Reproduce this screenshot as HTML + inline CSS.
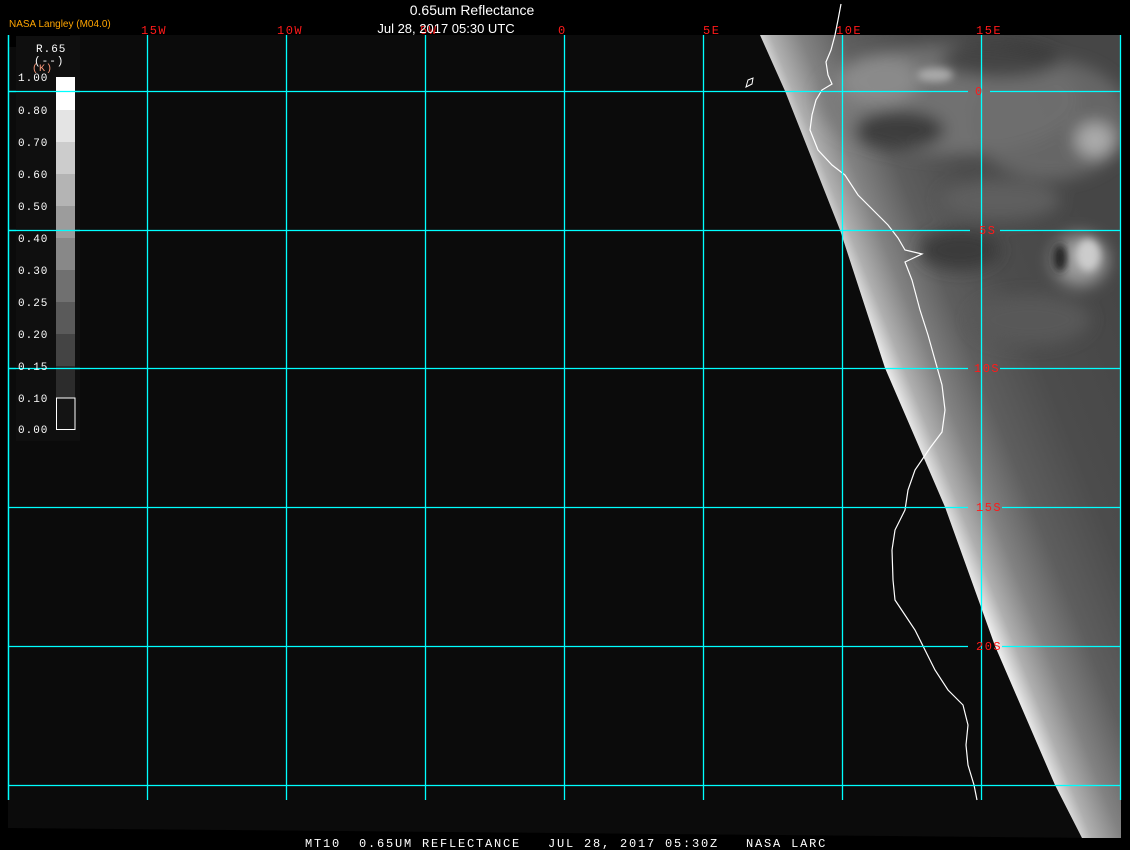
<!DOCTYPE html>
<html><head><meta charset="utf-8"><style>
html,body{margin:0;padding:0;background:#000;width:1130px;height:850px;overflow:hidden}
svg{display:block}
</style></head><body>
<svg width="1130" height="850" viewBox="0 0 1130 850" xmlns="http://www.w3.org/2000/svg">
<defs>
<linearGradient id="lg" gradientUnits="userSpaceOnUse" x1="900" y1="420" x2="1135" y2="326">
<stop offset="0" stop-color="#ffffff"/>
<stop offset="0.04" stop-color="#dcdcdc"/>
<stop offset="0.09" stop-color="#b0b0b0"/>
<stop offset="0.2" stop-color="#828282"/>
<stop offset="0.36" stop-color="#5e5e5e"/>
<stop offset="0.6" stop-color="#4c4c4c"/>
<stop offset="1" stop-color="#464646"/>
</linearGradient>
<filter id="bl" x="-50%" y="-50%" width="200%" height="200%"><feGaussianBlur stdDeviation="8"/></filter>
<filter id="bl2" x="-50%" y="-50%" width="200%" height="200%"><feGaussianBlur stdDeviation="4"/></filter>
<clipPath id="ec"><polygon points="760,35 785,91 840,230 885,368 945,507 995,646 1055,785 1082,838 1121,838 1121,35"/></clipPath>
</defs>
<polygon points="8,35 1121,35 1121,838 1105,838 8,828" fill="#0b0b0b"/>
<rect x="0" y="35" width="70" height="12" fill="#000"/>
<g clip-path="url(#ec)">
<rect x="700" y="30" width="430" height="820" fill="url(#lg)"/>
<g filter="url(#bl)">
<ellipse cx="950" cy="100" rx="130" ry="55" fill="#7a7a7a" opacity="0.8"/>
<ellipse cx="1050" cy="120" rx="80" ry="60" fill="#6e6e6e" opacity="0.8"/>
<ellipse cx="900" cy="130" rx="45" ry="20" fill="#3e3e3e"/>
<ellipse cx="1000" cy="200" rx="60" ry="20" fill="#5e5e5e"/>
<ellipse cx="1095" cy="140" rx="20" ry="18" fill="#aaa"/>
<ellipse cx="1080" cy="260" rx="28" ry="26" fill="#999"/>
<ellipse cx="1000" cy="60" rx="60" ry="18" fill="#333" opacity="0.7"/>
<ellipse cx="1030" cy="320" rx="60" ry="25" fill="#595959"/>
<ellipse cx="960" cy="250" rx="40" ry="20" fill="#3a3a3a"/>
<ellipse cx="880" cy="80" rx="40" ry="25" fill="#999" opacity="0.6"/>
</g>
<g filter="url(#bl2)">
<ellipse cx="1088" cy="255" rx="12" ry="16" fill="#ccc"/>
<ellipse cx="1060" cy="258" rx="7" ry="14" fill="#222"/>
<ellipse cx="935" cy="75" rx="18" ry="7" fill="#aaa"/>
</g>
</g>
<polyline fill="none" stroke="#fff" stroke-width="1.2" points="841,4 838,20 835,35 831,50 826,62 828,75 832,84 822,90 816,100 812,115 810,130 818,150 832,165 845,175 858,195 873,210 888,225 898,238 905,250 922,254 905,262 912,280 920,310 928,335 935,360 942,385 945,410 942,432 930,448 915,470 908,490 905,510 895,530 892,550 893,580 895,600 905,615 915,630 925,650 935,670 948,690 963,705 968,725 966,745 968,765 974,785 977,800"/>
<path d="M748,80 l5,-2 l-1,6 l-6,3 z" fill="none" stroke="#fff" stroke-width="1"/>
<g stroke="#00ffff" stroke-width="1.3" fill="none">
<line x1="8.5" y1="35" x2="8.5" y2="800"/>
<line x1="147.5" y1="35" x2="147.5" y2="800"/>
<line x1="286.5" y1="35" x2="286.5" y2="800"/>
<line x1="425.5" y1="35" x2="425.5" y2="800"/>
<line x1="564.5" y1="35" x2="564.5" y2="800"/>
<line x1="703.5" y1="35" x2="703.5" y2="800"/>
<line x1="842.5" y1="35" x2="842.5" y2="800"/>
<line x1="981.5" y1="35" x2="981.5" y2="800"/>
<line x1="1120.5" y1="35" x2="1120.5" y2="800"/>
<line x1="8" y1="91.5" x2="968" y2="91.5"/><line x1="990" y1="91.5" x2="1121" y2="91.5"/>
<line x1="8" y1="230.5" x2="970" y2="230.5"/><line x1="1000" y1="230.5" x2="1121" y2="230.5"/>
<line x1="8" y1="368.5" x2="968" y2="368.5"/><line x1="1000" y1="368.5" x2="1121" y2="368.5"/>
<line x1="8" y1="507.5" x2="968" y2="507.5"/><line x1="1002" y1="507.5" x2="1121" y2="507.5"/>
<line x1="8" y1="646.5" x2="968" y2="646.5"/><line x1="1002" y1="646.5" x2="1121" y2="646.5"/>
<line x1="8" y1="785.5" x2="1121" y2="785.5"/>
</g>
<g font-family="Liberation Mono, monospace" font-size="12" fill="#ff1a1a" letter-spacing="1.5">
<text x="141" y="34">15W</text>
<text x="277" y="34">10W</text>
<text x="420" y="34">5W</text>
<text x="558" y="34">0</text>
<text x="703" y="34">5E</text>
<text x="836" y="34">10E</text>
<text x="976" y="34">15E</text>
<text x="975" y="95">0</text>
<text x="979" y="234">5S</text>
<text x="974" y="372">10S</text>
<text x="976" y="511">15S</text>
<text x="976" y="650">20S</text>
</g>
<text x="472" y="15" text-anchor="middle" font-family="Liberation Sans, sans-serif" font-size="14" fill="#fff">0.65um Reflectance</text>
<text x="446" y="33" text-anchor="middle" font-family="Liberation Sans, sans-serif" font-size="13" fill="#fff">Jul 28, 2017 05:30 UTC</text>
<text x="9" y="27" font-family="Liberation Sans, sans-serif" font-size="10" fill="#ffa500">NASA Langley (M04.0)</text>
<rect x="16" y="36" width="64" height="405" fill="#0f0f0f"/>
<line x1="8.5" y1="35" x2="8.5" y2="800" stroke="#00ffff" stroke-width="1.3"/>
<line x1="8" y1="91.5" x2="80" y2="91.5" stroke="#00ffff" stroke-width="1.3"/>
<line x1="8" y1="230.5" x2="80" y2="230.5" stroke="#00ffff" stroke-width="1.3"/>
<line x1="8" y1="368.5" x2="80" y2="368.5" stroke="#00ffff" stroke-width="1.3"/>
<g font-family="Liberation Mono, monospace" font-size="11" fill="#fff" letter-spacing="1">
<text x="36" y="52">R.65</text>
<text x="34" y="64">(--)</text>
<text x="32" y="71" fill="#ff9a7a" font-size="10">(K)</text>
<text x="18" y="81">1.00</text>
<text x="18" y="114">0.80</text>
<text x="18" y="146">0.70</text>
<text x="18" y="178">0.60</text>
<text x="18" y="210">0.50</text>
<text x="18" y="242">0.40</text>
<text x="18" y="274">0.30</text>
<text x="18" y="306">0.25</text>
<text x="18" y="338">0.20</text>
<text x="18" y="370">0.15</text>
<text x="18" y="402">0.10</text>
<text x="18" y="433">0.00</text>
</g>
<rect x="56" y="77" width="19" height="33" fill="#fff"/>
<rect x="56" y="110" width="19" height="32" fill="#e4e4e4"/>
<rect x="56" y="142" width="19" height="32" fill="#cccccc"/>
<rect x="56" y="174" width="19" height="32" fill="#b4b4b4"/>
<rect x="56" y="206" width="19" height="32" fill="#9c9c9c"/>
<rect x="56" y="238" width="19" height="32" fill="#888"/>
<rect x="56" y="270" width="19" height="32" fill="#707070"/>
<rect x="56" y="302" width="19" height="32" fill="#5a5a5a"/>
<rect x="56" y="334" width="19" height="32" fill="#444"/>
<rect x="56" y="366" width="19" height="32" fill="#2c2c2c"/>
<rect x="56.5" y="398" width="18.5" height="31.5" fill="#141414" stroke="#fff" stroke-width="1"/>
<line x1="56" y1="91.5" x2="80" y2="91.5" stroke="#00ffff" stroke-width="1.3"/>
<line x1="56" y1="230.5" x2="80" y2="230.5" stroke="#00ffff" stroke-width="1.3"/>
<line x1="56" y1="368.5" x2="80" y2="368.5" stroke="#00ffff" stroke-width="1.3"/>
<rect x="0" y="838" width="1130" height="12" fill="#000"/>
<text x="305" y="847" font-family="Liberation Mono, monospace" font-size="12" fill="#fff" letter-spacing="1.8" xml:space="preserve">MT10  0.65UM REFLECTANCE   JUL 28, 2017 05:30Z   NASA LARC</text>
</svg>
</body></html>
